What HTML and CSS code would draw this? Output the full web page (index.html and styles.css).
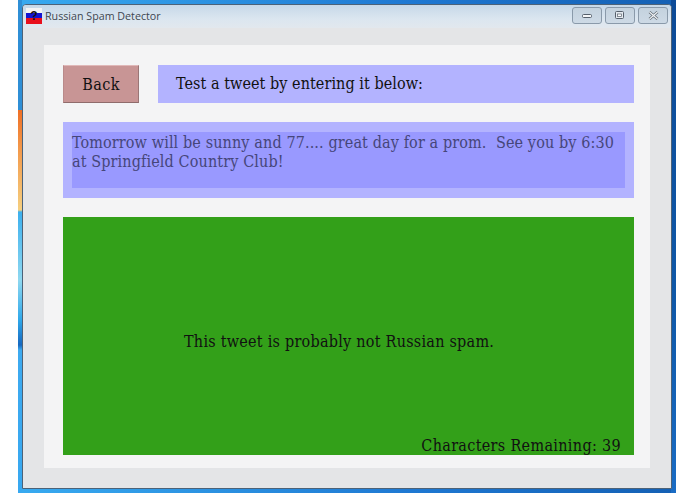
FILE: index.html
```html
<!DOCTYPE html>
<html lang="en">
<head>
<meta charset="utf-8">
<title>Russian Spam Detector</title>
<link rel="stylesheet" href="styles.css">
</head>
<body>
<div class="frame">
  <div class="window">
    <div class="titlebar">
      <svg class="app-icon" width="16" height="16" viewBox="0 0 16 16">
        <rect y="0" width="16" height="5" fill="#f4f4f4"/>
        <rect y="5" width="16" height="5" fill="#1414d0"/>
        <rect y="10" width="16" height="6" fill="#e80f1c"/>
        <text x="8" y="11.5" class="icon-q">?</text>
      </svg>
      <span class="title">Russian Spam Detector</span>
      <div class="controls">
        <div class="ctl ctl-min"><svg width="11" height="6" viewBox="0 0 11 6"><rect x="0.5" y="1.5" width="9" height="3" rx="1" fill="#f4f6f8" stroke="#56606c"/></svg></div>
        <div class="ctl ctl-max"><svg width="10" height="9" viewBox="0 0 10 9"><rect x="0.5" y="0.5" width="8" height="7" rx="1" fill="#e4eaf0" stroke="#56606c"/><rect x="2.5" y="3" width="4" height="2.5" fill="#fff" stroke="#56606c" stroke-width="0.7"/></svg></div>
        <div class="ctl ctl-close"><svg width="11" height="9" viewBox="0 0 11 9"><path d="M1.5 1 L9.5 8 M9.5 1 L1.5 8" stroke="#5c6670" stroke-width="2.6" fill="none"/><path d="M1.5 1 L9.5 8 M9.5 1 L1.5 8" stroke="#f2f4f6" stroke-width="1.2" fill="none"/></svg></div>
      </div>
    </div>
    <div class="client">
      <main class="panel">
        <div class="top-row">
          <button class="back">Back</button>
          <div class="prompt">Test a tweet by entering it below:</div>
        </div>
        <div class="input-wrap">
          <div class="tweet">Tomorrow will be sunny and 77.... great day for a prom.&nbsp; See you by 6:30 at Springfield Country Club!</div>
        </div>
        <div class="result">
          <div class="verdict">This tweet is probably not Russian spam.</div>
          <div class="remaining">Characters Remaining: 39</div>
        </div>
      </main>
    </div>
  </div>
</div>
</body>
</html>
```
FILE: styles.css
```css
html, body {
  margin: 0;
  padding: 0;
  background: #fff;
  height: 494px;
  overflow: hidden;
}
body {
  padding-left: 18px;
  font-family: "DejaVu Serif Condensed", "DejaVu Serif", serif;
  font-stretch: condensed;
}
.frame {
  width: 658px;
  height: 493px;
  box-sizing: border-box;
  padding: 4px;
  background:
    linear-gradient(180deg, #2f8fd6 0, #2f8fd6 110px, #ef6f25 110px, #f39a4c 150px, #f5cf80 210px, #3cb0ee 212px, #8fd8f0 280px, #2fa8ea 320px, #1668c0 345px, #3daaf0 350px, #38a8f0 100%) left / 4px 100% no-repeat,
    linear-gradient(180deg, #0d4a96 0, #0f58a8 300px, #1a6cc4 100%) right / 5px 100% no-repeat,
    linear-gradient(90deg, #38aaf0, #1e78d2 60%, #1460b4);
}
.window {
  width: 650px;
  height: 485px;
  display: flex;
  flex-direction: column;
  border: 1px solid #4c6278;
  border-radius: 4px 4px 0 0;
  box-sizing: border-box;
  background: #e4e5e7;
}
.titlebar {
  height: 23px;
  flex: none;
  display: flex;
  align-items: flex-start;
  background: linear-gradient(180deg, #c6d8e8 0, #dbe6f0 60%, #e2e8ee 100%);
  border-radius: 3px 3px 0 0;
}
.app-icon {
  margin: 3px 0 0 3px;
  flex: none;
}
.icon-q {
  font-family: "Liberation Sans", sans-serif;
  font-size: 12px;
  font-weight: 700;
  text-anchor: middle;
  fill: #111;
}
.title {
  margin: 3px 0 0 3px;
  font-family: "Open Sans", "Noto Sans", sans-serif;
  font-stretch: normal;
  font-size: 10.7px;
  line-height: 16px;
  color: #3e4650;
}
.controls {
  margin-left: auto;
  margin-right: 3px;
  display: flex;
  gap: 3px;
}
.ctl {
  width: 28px;
  height: 15px;
  display: flex;
  align-items: center;
  justify-content: center;
  margin-top: 2px;
  border: 1px solid #8a9aaa;
  border-radius: 3px;
  background: linear-gradient(180deg, #c4d2de, #cddae6);
}
.client {
  flex: 1;
  padding: 17px 20px 20px 21px;
}
.panel {
  width: 606px;
  height: 423px;
  box-sizing: border-box;
  background: #f4f4f5;
  padding: 20px 16px 13px 19px;
  display: flex;
  flex-direction: column;
  gap: 19px;
}
.top-row {
  display: flex;
  gap: 19px;
  height: 38px;
  flex: none;
}
.back {
  width: 76px;
  height: 38px;
  padding: 0;
  border: 1px solid #b98a8a;
  border-bottom-color: #8f6c6c;
  border-right-color: #9a7676;
  border-top-color: #e0b8b8;
  background: #c89595;
  font-family: inherit;
  font-stretch: inherit;
  font-size: 16px;
  letter-spacing: 0.4px;
  color: #111;
}
.prompt {
  flex: 1;
  background: #b3b3ff;
  padding-left: 18px;
  font-size: 16px;
  line-height: 38px;
  letter-spacing: 0.06px;
  color: #111;
}
.input-wrap {
  height: 76px;
  flex: none;
  box-sizing: border-box;
  background: #b3b3ff;
  padding: 10px 9px;
}
.tweet {
  height: 56px;
  background: #9999ff;
  font-size: 16px;
  line-height: 19px;
  letter-spacing: 0.12px;
  color: #46467a;
  padding-top: 1px;
  box-sizing: border-box;
}
.result {
  flex: 1;
  background: #33a019;
  display: flex;
  flex-direction: column;
  color: #111;
}
.verdict {
  margin: 114px 0 0 121px;
  font-size: 16px;
  line-height: 22px;
  letter-spacing: 0.25px;
}
.remaining {
  margin-top: auto;
  align-self: flex-end;
  margin-right: 13px;
  font-size: 16px;
  line-height: 22px;
  letter-spacing: 0.33px;
  margin-bottom: -2px;
}
```
